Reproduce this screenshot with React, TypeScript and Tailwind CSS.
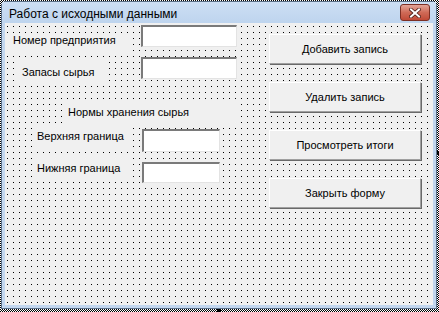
import React from 'react';

const Label = ({ text, className }: { text: string; className: string }) => (
  <div className={`shrink-0 bg-[#f0f0f0] text-[11px] leading-[13px] text-black whitespace-nowrap ${className}`}>
    {text}
  </div>
);

const Field = ({ className }: { className: string }) => (
  <div
    className={`shrink-0 bg-white border-t-2 border-l-2 border-t-[#7a7a7a] border-l-[#7a7a7a] border-b border-r border-b-[#e3e3e3] border-r-[#e3e3e3] ${className}`}
  />
);

const FormButton = ({ text }: { text: string }) => (
  <button className="w-[152px] h-[30px] bg-[#f0f0f0] border-t border-l border-t-white border-l-white border-r border-b border-r-[#a0a0a0] border-b-[#a0a0a0] shadow-[1px_1px_0_#696969] text-[11px] text-black">
    {text}
  </button>
);

const CloseButton = () => (
  <div className="mt-[2px] mr-[3px] flex h-[17px] w-[30px] items-center justify-center rounded-[3px] border border-[#7c2f24] bg-gradient-to-b from-[#e3a497] via-[#cf6a57] to-[#c04a37]">
    <svg width="12" height="10" viewBox="0 0 12 10">
      <path d="M2 1.5 L10 8.5 M10 1.5 L2 8.5" stroke="#4a1a14" strokeWidth="3.6" strokeLinecap="square" />
      <path d="M2 1.5 L10 8.5 M10 1.5 L2 8.5" stroke="#ffffff" strokeWidth="2" strokeLinecap="square" />
    </svg>
  </div>
);

export default function App() {
  return (
    <div className="relative w-[439px] h-[312px] bg-[image:repeating-conic-gradient(#000_0_25%,#fff_0_50%)] bg-[length:2px_2px] p-[1px] pr-[2px] pb-[3px] font-['Liberation_Sans',Arial,sans-serif]">
      <div className="flex h-full flex-col rounded-t-[5px] border border-[#5b7089] bg-[#c3d7ef] px-[3px] pb-[3px]">
        {/* Title bar */}
        <div className="flex h-[21px] shrink-0 items-start justify-between bg-gradient-to-b from-[#cddff4] to-[#bed4ee] -mx-[3px] px-[3px]">
          <span className="pl-[4px] pt-[5px] text-[12px] leading-[14px] text-black">Работа с исходными данными</span>
          <CloseButton />
        </div>

        {/* Client area */}
        <div className="flex flex-1 bg-[#f0f0f0] bg-[image:conic-gradient(at_1px_1px,transparent_75%,#000_0)] bg-[length:6px_6px] bg-[position:2px_3px]">
          {/* Left: fields */}
          <div className="flex w-[240px] flex-col">
            <div className="flex h-[34px] items-start">
              <Label text="Номер предприятия" className="ml-[2px] mt-[11px] h-[20px] w-[124px] pl-[6px] pt-0" />
              <Field className="ml-[10px] mt-[2px] h-[22px] w-[96px]" />
            </div>
            <div className="flex h-[44px] items-start">
              <Label text="Запасы сырья" className="ml-[13px] mt-[3px] h-[24px] w-[90px] pl-[4px] pt-[6px]" />
              <Field className="ml-[33px] h-[22px] w-[96px]" />
            </div>
            <div className="flex h-[24px] items-start">
              <Label text="Нормы хранения сырья" className="ml-[58px] h-[23px] w-[178px] pl-[5px] pt-[5px]" />
            </div>
            <div className="flex h-[33px] items-start">
              <Label text="Верхняя граница" className="ml-[27px] h-[22px] w-[96px] pl-[5px] pt-[5px]" />
              <Field className="ml-[14px] mt-[4px] h-[23px] w-[78px]" />
            </div>
            <div className="flex items-start">
              <Label text="Нижняя граница" className="ml-[27px] h-[22px] w-[96px] pl-[5px] pt-[4px]" />
              <Field className="ml-[14px] mt-[4px] h-[21px] w-[78px]" />
            </div>
          </div>

          {/* Right: buttons */}
          <div className="ml-[24px] flex flex-col gap-[18px] pt-[11px]">
            <FormButton text="Добавить запись" />
            <FormButton text="Удалить запись" />
            <FormButton text="Просмотреть итоги" />
            <FormButton text="Закрыть форму" />
          </div>
        </div>
      </div>

      {/* sizing handles */}
      <div className="absolute bottom-0 left-[217px] h-[3px] w-[4px] bg-black" />
      <div className="absolute right-0 top-[151px] h-[4px] w-[2px] bg-black" />
    </div>
  );
}
